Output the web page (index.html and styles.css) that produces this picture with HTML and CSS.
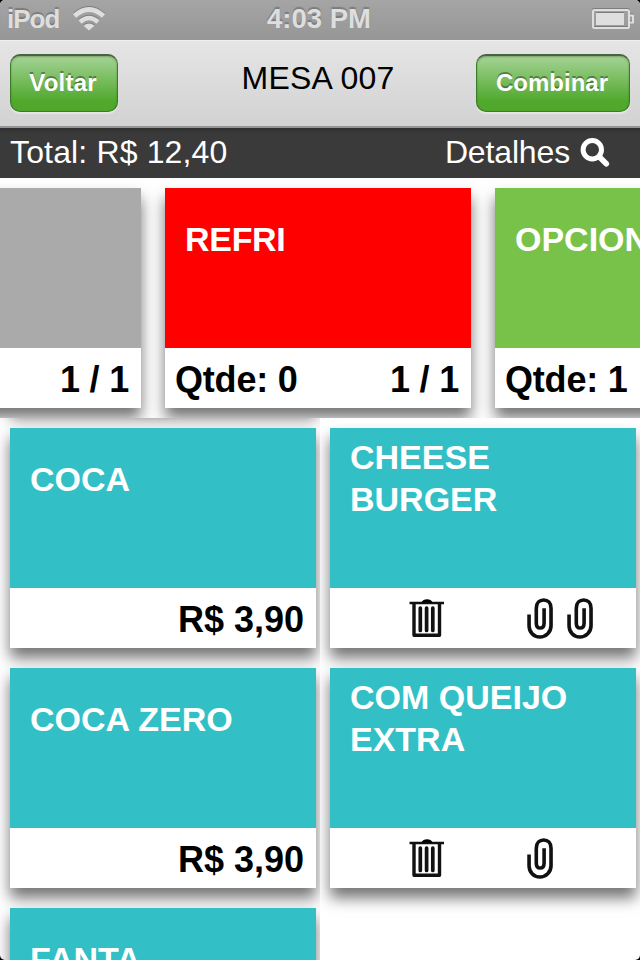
FILE: index.html
```html
<!DOCTYPE html>
<html lang="pt">
<head>
<meta charset="utf-8">
<title>Mesa 007</title>
<link rel="stylesheet" href="styles.css">
</head>
<body>
<svg class="defs" width="0" height="0">
  <symbol id="trash" viewBox="0 0 36 40">
    <path d="M0.5 5H35" stroke-width="2.6"/>
    <path d="M12.5 4.5Q14 1.3 18 1.3T23.5 4.5Z" fill="#000" stroke="none"/>
    <path d="M5 5V37.3H30.5V5" stroke-width="3.4" stroke-linejoin="round"/>
    <path d="M11.3 10V32.5M17.6 10V32.5M23.8 10V32.5" stroke-width="3.7" stroke-linecap="round"/>
  </symbol>
  <symbol id="clip" viewBox="0 0 26 42">
    <path d="M1.8 17V28.5C1.8 35 6.5 40 12.8 40S24.3 35 24.3 28.5V10.5C24.3 5 21 2 16.8 2S9.2 5 9.2 10.5V25.5C9.2 28.5 10.5 30.8 13.2 30.8S17.2 28.5 17.2 25.5V10.5" stroke-width="3.7"/>
  </symbol>
</svg>
<div class="screen">
  <header class="status">
    <div class="carrier"><span>iPod</span>
      <svg width="32" height="24" viewBox="0 0 32 24"><g class="wifi"><path d="M1.5 9Q16-4 30.5 9" stroke-width="4.8"/><path d="M7 15Q16 7 25 15" stroke-width="4.4"/><path d="M10.5 18.8Q16 14 21.5 18.8L16 23.5Z" fill="#dedede" stroke="none"/></g></svg>
    </div>
    <div class="clock">4:03 PM</div>
    <svg class="battery" width="42" height="22" viewBox="0 0 42 22"><rect x="1" y="2" width="36" height="18" rx="1.5" stroke-width="2"/><path d="M38 7.5H41V14.5H38" stroke-width="2"/><rect x="4" y="5" width="28" height="12" fill="#dedede" stroke="none"/></svg>
  </header>
  <nav class="nav">
    <button class="btn back">Voltar</button>
    <h1>MESA 007</h1>
    <button class="btn combine">Combinar</button>
  </nav>
  <div class="total">
    <span class="sum">Total: R$ 12,40</span>
    <span class="details">Detalhes</span>
    <svg width="30" height="30" viewBox="0 0 30 30"><circle cx="12.3" cy="11.8" r="9.2" stroke-width="5"/><path d="M19.5 19L26.3 25.8" stroke-width="5.6" stroke-linecap="round"/></svg>
  </div>
  <section class="strip">
    <article class="card gray"><div class="top"></div><div class="foot"><span></span><span>1 / 1</span></div></article>
    <article class="card red"><div class="top">REFRI</div><div class="foot"><span>Qtde: 0</span><span>1 / 1</span></div></article>
    <article class="card green"><div class="top">OPCIONAL</div><div class="foot"><span>Qtde: 1</span><span></span></div></article>
  </section>
  <main class="lists">
    <section class="list menu">
      <article class="card"><div class="top"></div><div class="foot"></div></article>
      <article class="card"><div class="top">COCA</div><div class="foot"><span></span><span class="price">R$ 3,90</span></div></article>
      <article class="card"><div class="top">COCA ZERO</div><div class="foot"><span></span><span class="price">R$ 3,90</span></div></article>
      <article class="card"><div class="top">FANTA</div><div class="foot"></div></article>
    </section>
    <section class="list order">
      <article class="card"><div class="top two">CHEESE<br>BURGER</div><div class="foot icons"><svg class="trash"><use href="#trash"/></svg><svg class="clip"><use href="#clip"/></svg><svg class="clip"><use href="#clip"/></svg></div></article>
      <article class="card"><div class="top two">COM QUEIJO<br>EXTRA</div><div class="foot icons"><svg class="trash"><use href="#trash"/></svg><svg class="clip"><use href="#clip"/></svg></div></article>
    </section>
  </main>
</div>
</body>
</html>
```
FILE: styles.css
```css
* { box-sizing: border-box; }
body { margin: 0; background: #000; font-family: "Liberation Sans", Arial, sans-serif; }
svg { fill: none; flex: none; }
.defs { position: absolute; }
.screen { width: 640px; height: 960px; overflow: hidden; background: #fff; border-radius: 5px; display: flex; flex-direction: column; }
.status { height: 40px; flex: none; display: grid; grid-template-columns: 1fr auto 1fr; padding: 0 6px 0 7px; background: linear-gradient(#a5a5a5, #969696); color: #dedede; font-weight: bold; font-size: 26px; line-height: 38px; text-shadow: 0 -2px 1px #7c7c7c; }
.carrier { display: flex; gap: 12px; }
.carrier span { width: 54px; letter-spacing: -1px; }
.carrier svg { margin-top: 7px; }
.status svg { stroke: #dedede; filter: drop-shadow(0 -1px 0 #7c7c7c); }
.clock { font-size: 27.5px; margin-left: -3px; }
.battery { justify-self: end; margin-top: 8px; }
.nav { height: 88px; flex: none; display: grid; grid-template-columns: 154px 1fr 154px; align-items: start; padding: 13px 10px 0; background: linear-gradient(#e5e5e5, #d2d2d2); border-top: 1px solid #f0f0f0; border-bottom: 2px solid #959595; }
.nav h1 { margin: 0 4px 0 0; font-weight: normal; font-size: 32px; line-height: 48px; letter-spacing: .2px; text-align: center; color: #000; white-space: nowrap; }
.btn { height: 58px; padding: 0 2px 2px 0; border: 1px solid #3d7a28; border-top: 2px solid #48643d; border-radius: 10px; background: linear-gradient(#a5d396, #50a92d 82%, #4fa72b); color: #fff; font: bold 24px/52px "Liberation Sans", Arial, sans-serif; text-shadow: 0 -2px 0 rgba(0,0,0,.35); box-shadow: 0 2px 1px #e6e6e6, inset 0 1px 2px rgba(0,0,0,.25); }
.back { width: 108px; letter-spacing: .2px; }
.combine { width: 154px; }
.total { height: 50px; flex: none; display: flex; align-items: flex-start; padding: 0 30px 0 10px; background: linear-gradient(#303030, #3a3a3a 5px); color: #fff; font-size: 32px; line-height: 49px; }
.sum { letter-spacing: .15px; }
.details { margin-left: auto; margin-right: 10px; letter-spacing: -.15px; }
.total svg { stroke: #fff; margin-top: 10px; }
.strip { height: 240px; flex: none; display: flex; justify-content: center; gap: 24px; padding-top: 10px; overflow: hidden; }
.strip .card:first-child { margin-left: -4px; }
.strip .foot { letter-spacing: -.2px; }
.card { width: 306px; height: 220px; flex: none; background: #fff; box-shadow: 0 10px 14px rgba(0,0,0,.55); }
.top { height: 160px; padding: 30px 20px; background: #32bfc5; color: #fff; font-size: 34px; line-height: 42px; font-weight: bold; white-space: nowrap; overflow: hidden; }
.top.two { padding-top: 8px; }
.red .top { background: #f00; letter-spacing: -.3px; }
.gray .top { background: #aaa; }
.green .top { background: #79c249; }
.foot { height: 60px; display: flex; justify-content: space-between; padding: 0 12px 0 10px; color: #000; font-size: 36px; font-weight: bold; line-height: 64px; }
.lists { height: 542px; flex: none; display: grid; grid-template-columns: 320px 320px; }
.list { height: 542px; overflow: hidden; display: flex; flex-direction: column; gap: 20px; padding: 10px; }
.menu .card:first-child { margin-top: -240px; }
.foot.icons { justify-content: flex-start; padding: 10px 0 0 79px; gap: 14px; stroke: #111; }
.trash { width: 36px; height: 40px; margin-right: 68px; }
.clip { width: 26px; height: 41px; }
```
